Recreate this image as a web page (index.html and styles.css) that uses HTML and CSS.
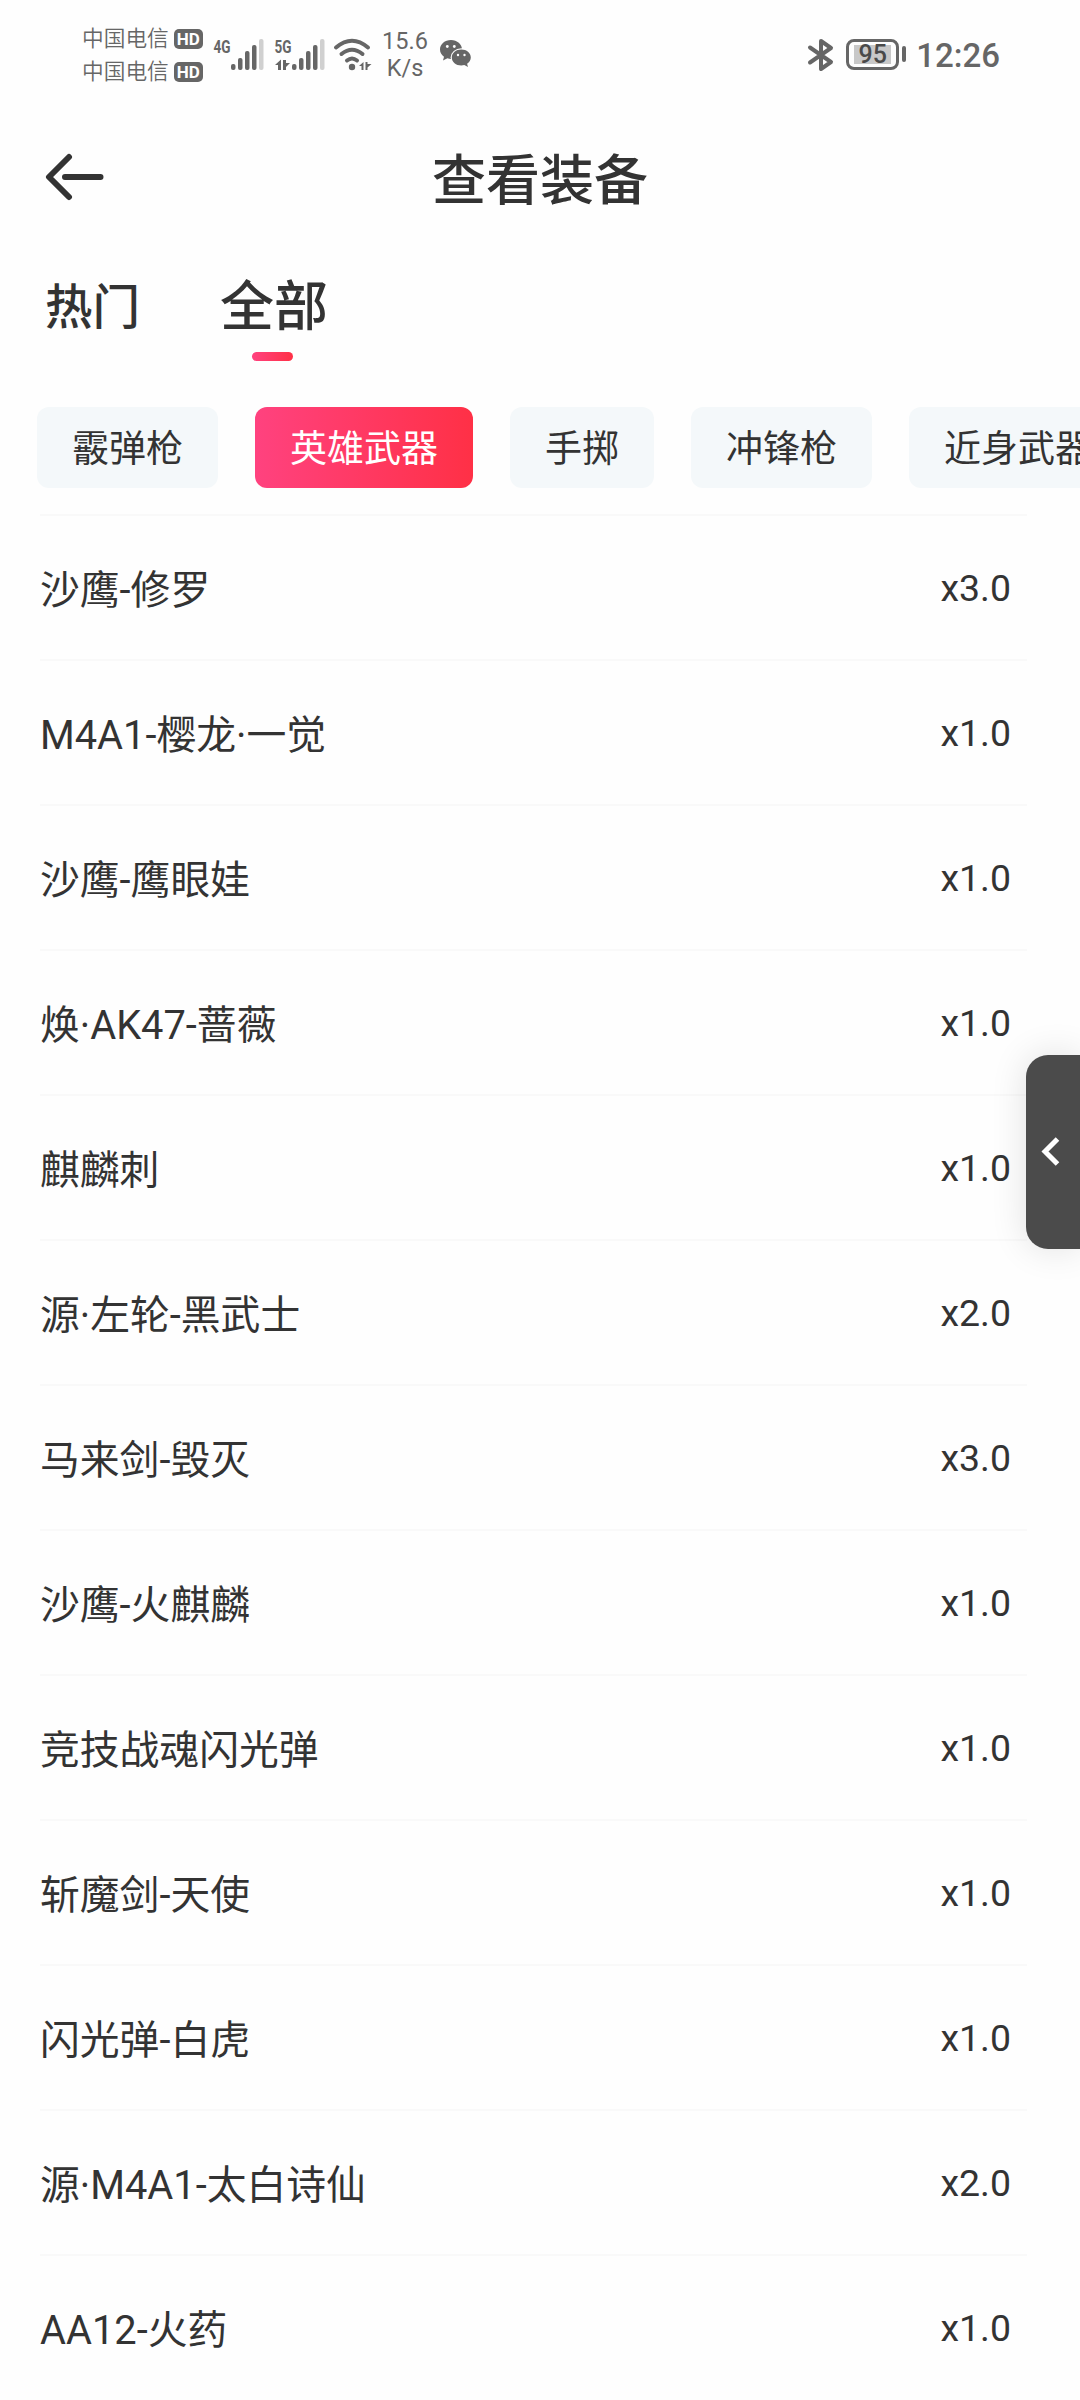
FILE: index.html
```html
<!DOCTYPE html>
<html lang="zh-CN">
<head>
    <meta charset="UTF-8">
    <meta name="viewport" content="width=device-width, initial-scale=1.0">
    <title>查看装备</title>
    <link rel="stylesheet" href="styles.css">
</head>
<body>
    <div class="status-bar">
        <div class="carriers">
            <div class="carrier">中国电信<span class="hd">HD</span></div>
            <div class="carrier">中国电信<span class="hd">HD</span></div>
        </div>
        <svg class="signal-4g" width="51" height="32" viewBox="0 0 51 32">
            <text class="net" x="0.5" y="14" textLength="17" lengthAdjust="spacingAndGlyphs">4G</text>
            <rect x="18" y="25" width="4.5" height="6" rx="2"/>
            <rect x="25" y="19" width="4.5" height="12" rx="2"/>
            <rect x="32" y="12" width="4.5" height="19" rx="2"/>
            <rect x="39" y="6" width="4.5" height="25" rx="2"/>
            <rect class="off" x="46" y="0" width="4.5" height="31" rx="2"/>
        </svg>
        <svg class="signal-5g" width="51" height="32" viewBox="0 0 51 32">
            <text class="net" x="0.5" y="14" textLength="17" lengthAdjust="spacingAndGlyphs">5G</text>
            <path d="M1 26l6-5.500V31H4v-5zM9 21v10h3v-3l4-4h-4v-3z"/>
            <rect x="18" y="25" width="4.5" height="6" rx="2"/>
            <rect x="25" y="19" width="4.5" height="12" rx="2"/>
            <rect x="32" y="12" width="4.5" height="19" rx="2"/>
            <rect x="39" y="6" width="4.5" height="25" rx="2"/>
            <rect class="off" x="46" y="0" width="4.5" height="31" rx="2"/>
        </svg>
        <svg class="wifi" width="38" height="32" viewBox="0 0 38 32">
            <g class="line">
                <path d="M2 8.500Q18 -5 34 8.500"/>
                <path d="M7.500 15Q18 6.500 28.500 15"/>
                <path d="M13 21.500Q18 17.500 23 21.500"/>
            </g>
            <circle cx="18" cy="28" r="3.200"/>
            <path d="M25 27l4.500-4v8h-2v-4zM31.500 23v8h2v-2.500l4-3.500h-4v-2z"/>
        </svg>
        <div class="speed"><span>15.6</span><span>K/s</span></div>
        <svg class="wechat" width="32" height="28" viewBox="0 0 32 28">
            <path d="M11 0C4.800 0 0 4.200 0 9.500c0 3 1.500 5.500 4 7.300L3 20.500l4.400-2.200c1.200.4 2.400.6 3.600.6 6.200 0 11-4.200 11-9.400S17.200 0 11 0z"/>
            <ellipse class="cut" cx="21.300" cy="17.500" rx="10.700" ry="9.300"/>
            <path d="M21.300 9.500c-5.300 0-9.500 3.500-9.500 8s4.200 8 9.500 8c1 0 2-.1 3-.4l3.700 2-.9-3.300c2.300-1.500 3.700-3.700 3.700-6.300 0-4.500-4.200-8-9.500-8z"/>
            <g class="cut">
                <circle cx="7.300" cy="6.500" r="1.400"/>
                <circle cx="14.300" cy="6.500" r="1.400"/>
                <circle cx="18" cy="15" r="1.200"/>
                <circle cx="24.500" cy="15" r="1.200"/>
            </g>
        </svg>
        <div class="status-right">
            <svg class="bluetooth" width="26" height="32" viewBox="0 0 26 32">
                <path class="line" d="M2 8.500l21 14.500-10 7V2l10 7L2 23.500"/>
            </svg>
            <div class="battery">
                <div class="battery-body"><span>95</span></div>
                <div class="battery-tip"></div>
            </div>
            <span class="time">12:26</span>
        </div>
    </div>

    <div class="header">
        <svg class="back" width="60" height="48" viewBox="0 0 60 48">
            <path d="M24 4L4 24l20 20M20 24h35.500"/>
        </svg>
        <h1>查看装备</h1>
    </div>

    <div class="tabs">
        <div class="tab">热门</div>
        <div class="tab active">全部</div>
    </div>

    <div class="chips">
        <div class="chip">霰弹枪</div>
        <div class="chip selected">英雄武器</div>
        <div class="chip">手掷</div>
        <div class="chip">冲锋枪</div>
        <div class="chip">近身武器</div>
    </div>

    <ul class="list">
        <li><span class="name">沙鹰-修罗</span><span class="count">x3.0</span></li>
        <li><span class="name">M4A1-樱龙·一觉</span><span class="count">x1.0</span></li>
        <li><span class="name">沙鹰-鹰眼娃</span><span class="count">x1.0</span></li>
        <li><span class="name">焕·AK47-蔷薇</span><span class="count">x1.0</span></li>
        <li><span class="name">麒麟刺</span><span class="count">x1.0</span></li>
        <li><span class="name">源·左轮-黑武士</span><span class="count">x2.0</span></li>
        <li><span class="name">马来剑-毁灭</span><span class="count">x3.0</span></li>
        <li><span class="name">沙鹰-火麒麟</span><span class="count">x1.0</span></li>
        <li><span class="name">竞技战魂闪光弹</span><span class="count">x1.0</span></li>
        <li><span class="name">斩魔剑-天使</span><span class="count">x1.0</span></li>
        <li><span class="name">闪光弹-白虎</span><span class="count">x1.0</span></li>
        <li><span class="name">源·M4A1-太白诗仙</span><span class="count">x2.0</span></li>
        <li><span class="name">AA12-火药</span><span class="count">x1.0</span></li>
    </ul>

    <div class="drawer">
        <svg width="20" height="32" viewBox="0 0 20 32">
            <path d="M17.500 3L5 15.500 17.500 28"/>
        </svg>
    </div>
</body>
</html>
```
FILE: styles.css
```css
* {
    box-sizing: border-box;
}
body {
    position: relative;
    width: 1080px;
    height: 2400px;
    margin: 0;
    overflow: hidden;
    background-color: #fefefe;
    color: #333;
    font-family: Roboto, "Noto Sans CJK SC", sans-serif;
}

/* status bar */
.status-bar {
    display: flex;
    align-items: flex-start;
    height: 110px;
    padding: 22px 80px 0 82px;
    color: #666;
}
.status-bar svg {
    flex: none;
    margin-top: 17px;
    overflow: visible;
    fill: #666;
}
.carriers {
    width: 131px;
}
.carrier {
    display: flex;
    align-items: center;
    gap: 5px;
    height: 33px;
    font-size: 21.7px;
    font-weight: 350;
    line-height: 30px;
    white-space: nowrap;
}
.hd {
    width: 29px;
    height: 20px;
    border-radius: 5px;
    background-color: #666;
    color: #fff;
    font-size: 17px;
    font-weight: 700;
    line-height: 20px;
    text-align: center;
}
.net {
    font-size: 19px;
    font-weight: 700;
}
.signal-4g {
    margin-right: 10px;
}
.signal-5g {
    margin-right: 9px;
}
.status-bar .off {
    fill: #d0d0d0;
}
.line {
    fill: none;
    stroke: #666;
    stroke-width: 4;
    stroke-linecap: round;
    stroke-linejoin: round;
}
.speed {
    display: flex;
    flex-direction: column;
    align-items: center;
    width: 44px;
    margin: 6px 13px 0 11px;
    font-size: 23.5px;
    line-height: 27px;
}
.status-bar .wechat {
    margin-top: 18px;
}
.cut {
    fill: #fefefe;
}
.status-right {
    display: flex;
    margin-left: auto;
}
.battery {
    display: flex;
    align-items: center;
    gap: 3px;
    height: 32px;
    margin: 16px 10px 0 12px;
}
.battery-body {
    width: 53px;
    height: 31px;
    padding: 3px 5px;
    border: 3px solid #666;
    border-radius: 8px;
}
.battery-body span {
    display: block;
    height: 19px;
    background-color: #c8c8c8;
    color: #4a4a4a;
    font-size: 25px;
    font-weight: 500;
    line-height: 20px;
    text-align: center;
}
.battery-tip {
    width: 4px;
    height: 16px;
    border-radius: 2px;
    background-color: #666;
}
.time {
    margin-top: 15px;
    font-size: 33px;
    font-weight: 500;
    line-height: 38px;
}

/* title */
.header {
    display: grid;
    grid-template-columns: 60px 1fr 60px;
    align-items: center;
    height: 134px;
    padding: 0 45px;
}
.back {
    fill: none;
    stroke: #333;
    stroke-width: 6;
    stroke-linecap: round;
    stroke-linejoin: round;
}
.header h1 {
    margin: 9px 0 0;
    font-size: 54px;
    font-weight: 500;
    line-height: 70px;
    text-align: center;
}

/* tabs */
.tabs {
    display: flex;
    gap: 80px;
    height: 163px;
    padding: 29px 0 0 45px;
    font-weight: 500;
}
.tab {
    font-size: 47.5px;
    line-height: 70px;
}
.tab.active {
    font-size: 54px;
}
.tab.active::after {
    content: "";
    display: block;
    width: 41px;
    height: 9px;
    margin: 9px auto 0 32px;
    border-radius: 5px;
    background: linear-gradient(to right, #ff427f, #ff3046);
}

/* category chips */
.chips {
    display: flex;
    gap: 37px;
    height: 107px;
    padding-left: 37px;
    overflow: hidden;
}
.chip {
    flex: none;
    height: 81px;
    padding: 0 35px;
    border-radius: 12px;
    background-color: #f4f8fa;
    font-size: 37px;
    line-height: 86px;
}
.chip.selected {
    background: linear-gradient(to right, #ff427f, #ff3046);
    color: #fff;
}

/* equipment list */
.list {
    margin: 0 53px 0 40px;
    padding: 0;
    list-style: none;
}
.list li {
    display: flex;
    justify-content: space-between;
    align-items: center;
    height: 145px;
    padding-right: 16px;
    border-top: 2px solid #f9f9f9;
}
.name {
    padding-bottom: 2px;
    font-size: 39.8px;
}
.count {
    font-size: 37.44px;
}

/* floating drawer handle */
.drawer {
    position: absolute;
    top: 1055px;
    right: 0;
    display: flex;
    align-items: center;
    width: 54px;
    height: 194px;
    padding-left: 14px;
    border-radius: 22px 0 0 22px;
    background-color: #4b4b4b;
    box-shadow: 0 0 36px rgba(0, 0, 0, 0.12);
}
.drawer path {
    fill: none;
    stroke: #fff;
    stroke-width: 5;
}
```
